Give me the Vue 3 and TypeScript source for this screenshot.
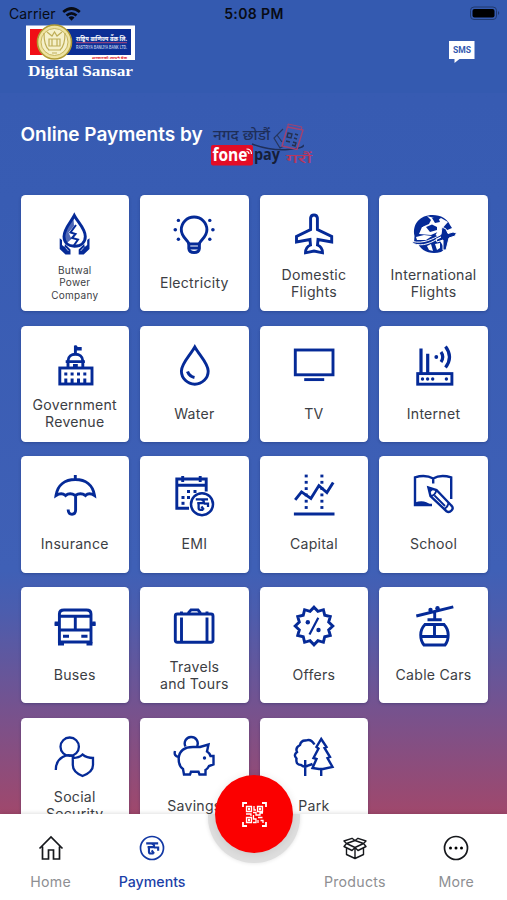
<script setup lang="ts">
interface Service {
  label: string[]
  icon: string
  small?: boolean
}

const rupee = 'M0 1H13M1.5 5H8.5Q9 1.5 6 1.5M3 5V10Q3 12 5 12H8M6 8.5L8.5 12M8.5 5.5H13V9'

function starPoints(count: number, outer: number, inner: number): string {
  const pts: string[] = []
  for (let i = 0; i < count * 2; i++) {
    const r = i % 2 === 0 ? outer : inner
    const a = (Math.PI * i) / count - Math.PI / 2
    pts.push(`${(24 + r * Math.cos(a)).toFixed(2)},${(24 + r * Math.sin(a)).toFixed(2)}`)
  }
  return pts.join(' ')
}

const fill = 'fill="currentColor" stroke="none"'

const dottedColumn = (x: number): string =>
  [5, 11.3, 17.6, 23.9, 30.2, 36.5]
    .map((y) => `<rect x="${x - 1.5}" y="${y - 1.4}" width="3" height="2.8" ${fill}/>`)
    .join('')

const services: Service[] = [
  {
    label: ['Butwal', 'Power', 'Company'],
    small: true,
    icon: `<path d="M23.3 5.5C20 12 13 18.5 13 26.5C13 32.5 17 36 23.5 36.3C30.5 36 34.3 32 34.3 26.5C34.3 18.5 26.5 12 23.3 5.5Z"/>
      <path d="M22.5 8C19 15 13.5 20 13.5 26.5C13.500 29 14.500 31 16.500 32.500L20.500 29L17.500 22.500L23 16Z" ${fill} opacity=".7"/>
      <path d="M25 15L19.5 22.5L24.5 24L21 28L27 29.5L22.5 36" stroke-width="2"/>
      <path d="M8.7 28.2L11 30V35L13.5 37L14 34L19.5 39.5V44.5H14.5L8.7 39Z M38.5 28.2L36.2 30V35L33.7 37L33.2 34L27.700 39.500V44.500H32.700L38.500 39Z" ${fill}/>
      <path d="M14.500 37.500L17.500 41M32.700 37.500L29.700 41" stroke="#fff" stroke-width=".7"/>`
  },
  {
    label: ['Electricity'],
    icon: `<path d="M19 34.500C19 30.500 11.300 28 11.300 19.800A12.800 12.800 0 0 1 36.900 19.800C36.900 28 29.200 30.500 29.200 34.500"/>
      <path d="M18.800 34H29.400V38.500Q29 42.500 24.100 42.500T18.800 38.500Z"/><path d="M19 38H29" stroke-width="3"/>
      <g ${fill}><circle cx="5.300" cy="19.800" r="1.800"/><circle cx="42.900" cy="19.800" r="1.800"/><circle cx="8.400" cy="10.400" r="1.700"/><circle cx="39.800" cy="10.400" r="1.700"/><circle cx="8.400" cy="29.300" r="1.700"/><circle cx="39.800" cy="29.300" r="1.700"/></g>`
  },
  {
    label: ['Domestic', 'Flights'],
    icon: `<path d="M20.600 8Q21 5 24 5T27.400 8V19.500L41.700 26.500V32L28 29.500L27.500 35Q32.500 37 32.500 42.800L24 41L15.500 42.800Q15.500 37 20.500 35L20 29.500L6.500 32V26.500L20.600 19.500Z"/>`
  },
  {
    label: ['International', 'Flights'],
    icon: `<path d="M4.500 26C2 14 10 5 22.500 5C31 5 37.500 9 40 15L42 18L35 21L29 19L25.500 25L30 28L23 31L4 33Z" ${fill}/>
      <path d="M7 31C10 41 20 45 31 42L35 39L30 31L25 29L16 34Z" ${fill}/>
      <path d="M17 6L21 10L19 14L12 17L9 24L21 25L30 21L38 12L31 8L28 10L24 8Z" fill="#fff" stroke="none"/>
      <path d="M16 17L22 14.500L27 17V20L20 22ZM22 8L28 7L30 12L25 13ZM9 16L13 13V17Z" ${fill}/>
      <path d="M6 27L14 25L22 26L16 30L7 30ZM17 36L21 34L23 41L19 40ZM25 34L30 33V38L27 40Z" fill="#fff" stroke="none"/>
      <path d="M2.500 31.500C13 34 23 29 31 24.500L32 17L36 19L38 23.500L43 22L46.500 23L45 26L39 28L36 40L33 40L33 30L27 32L26 29L31 27C21 33 13 37 3 33.500Z" fill="currentColor" stroke="#fff" stroke-width="1"/>`
  },
  {
    label: ['Government', 'Revenue'],
    icon: `<rect x="8.800" y="27" width="32.200" height="16"/><path d="M14.700 20.600H33.900M17 20C17 11 31.800 11 31.800 20V26M17 20V26M24.400 13V4.500"/>
      <path d="M24.400 4L27 6L30.700 6V9.500H24.400ZM22 23H26.800V27H22Z" ${fill}/>
      <g ${fill}><rect x="13.300" y="31.500" width="3" height="3"/><rect x="19.600" y="31.500" width="3" height="3"/><rect x="26" y="31.500" width="3" height="3"/><rect x="32.300" y="31.500" width="3" height="3"/><rect x="13.300" y="37.500" width="3" height="5"/><rect x="19.600" y="37.500" width="3" height="5"/><rect x="26" y="37.500" width="3" height="5"/><rect x="32.300" y="37.500" width="3" height="5"/></g>`
  },
  {
    label: ['Water'],
    icon: `<path d="M24.800 6C20 14.500 11.400 22.500 11.400 30A13.400 13.200 0 0 0 38.200 30C38.200 22.500 29.600 14.500 24.800 6Z"/><path d="M17.500 30.500Q19.500 35.500 24.500 36.500" stroke-width="3.200"/>`
  },
  {
    label: ['TV'],
    icon: `<rect x="5.300" y="9" width="37.700" height="24.800"/><path d="M14.200 38.600H34.200"/>`
  },
  {
    label: ['Internet'],
    icon: `<rect x="7.700" y="32.600" width="34.200" height="10.600"/><path d="M11 7.500V32M17.700 12.800V32M31 11Q34.500 16 31 21M35.500 5.500Q43.500 16 35.500 26.500" stroke-width="3.200"/>
      <g ${fill}><circle cx="26.300" cy="16" r="1.900"/><circle cx="12.500" cy="38" r="1.700"/><circle cx="17.600" cy="38" r="1.700"/><circle cx="22.700" cy="38" r="1.700"/><circle cx="36.400" cy="38" r="1.700"/></g>`
  },
  {
    label: ['Insurance'],
    icon: `<path d="M24.300 4V9M5 24.500C6.500 14 14 8.500 24.300 8.500S42 14 43.500 24.500Q38 21 34.500 24.500Q29.500 21 24.300 24.500Q19 21 14.500 24.500Q10.500 21 5 24.500ZM24.600 24V39Q24.600 43.200 21 43.200T17.200 39V38.500"/>`
  },
  {
    label: ['EMI'],
    icon: `<path d="M19 37.300H6.800V8H36.200V20.500M6.800 14.300H36.200M12.700 5V11M30.200 5V11"/>
      <g ${fill}><rect x="17" y="19" width="3" height="3"/><rect x="23.500" y="19" width="3" height="3"/><rect x="11.500" y="25" width="3" height="3"/><rect x="17" y="25" width="3" height="3"/><rect x="11.500" y="30.800" width="3" height="3"/></g>
      <circle cx="32" cy="33.200" r="11" stroke-width="2.500"/><path transform="translate(25.800 27.500) scale(.94)" d="${rupee}" stroke-width="2.400"/>`
  },
  {
    label: ['Capital'],
    icon: `${dottedColumn(16.2)}${dottedColumn(31.9)}<path d="M5.200 28.800L11.500 20.900L20.900 27.500L28.900 14.600L36.900 21.500L43.200 11.500M3.900 43H44.500"/>`
  },
  {
    label: ['School'],
    icon: `<path d="M23.200 12.500V7.500C18 4.500 11 4.500 5 6.300V34H22M23.200 7.500C28 4.500 35 4.500 41.200 6.300V28" stroke-width="2.400"/>
      <path d="M5 34V31.500Q14 28 21 34Z" ${fill}/>
      <path d="M18.400 16.500L20.500 25L36.500 40.200Q39 42 41.500 39.500T41.300 34.500L26.500 19Z" fill="#fff" stroke-width="2.400"/><path d="M20.500 25Q25 25 26.500 19M34 38Q37.500 36.500 38.500 32M24.500 24.500L35 35" stroke-width="1.800"/><path d="M17.500 15.500L24 18L20 21.500Z" ${fill}/>`
  },
  {
    label: ['Buses'],
    icon: `<path d="M8.400 40V12Q8.400 8 13 8H35.500Q40 8 40 12V40ZM8.400 14.300H40M8.400 28H40M24.300 14.300V28M12 34.200H18M30.300 34.200H36.500M3.700 22H8M40 22H44.500" />
      <path d="M3.700 19.500H7V24H3.700ZM41.200 19.500H44.500V24H41.200ZM7 40H13V43.500H7ZM35.500 40H41.400V43.500H35.500Z" ${fill}/>`
  },
  {
    label: ['Travels', 'and Tours'],
    icon: `<rect x="5.300" y="12" width="37.700" height="28.200" rx="2"/><path d="M11.500 15.500V40M37 15.500V40M18.700 12V10.500L21 7.900H28L30 10.500V12M11.500 9.500V12M37 9.500V12"/>`
  },
  {
    label: ['Offers'],
    icon: `<polygon points="${starPoints(12, 18.8, 15.2)}"/><path d="M28.300 15.700L19.500 32.500" stroke-width="2.200"/><circle cx="17.800" cy="20.300" r="2.200" ${fill}/><circle cx="28.500" cy="28" r="2.200" ${fill}/>`
  },
  {
    label: ['Cable Cars'],
    icon: `<path d="M6.300 14L43.300 4.800M17.500 17.700H31.700M24.700 10V18M15 22.500H34Q38.200 27 38.200 33Q38.200 39 35 43H14Q10.700 39 10.700 33Q10.700 27 15 22.500ZM24.500 22.500V34.500M10.700 34.500H38.200"/><circle cx="20.500" cy="8" r="2.200" ${fill}/><circle cx="27.500" cy="6.200" r="2.200" ${fill}/>`
  },
  {
    label: ['Social', 'Security'],
    icon: `<g stroke-width="2.300"><circle cx="18.700" cy="13.700" r="9.200"/><path d="M4.800 37C4.800 24 17 19.500 23 24M31.500 21.500Q36 25 42 25V32Q42 39 31.500 43Q21.800 39 21.800 32V25Q28 25 31.500 21.500Z"/></g>`
  },
  {
    label: ['Savings'],
    icon: `<g stroke-width="2.400"><path d="M15.500 13.500A6.500 6.500 0 1 1 27.200 13M8.700 25C9.500 17.500 15 14 23 14H30L38.500 11.500L37 18.500Q39.500 20 40.500 23H43.500V31.500L39 33Q37.500 36 35.500 37V41.500H29.500L28.500 38.800H21L20 41.500H14L13 36Q8.500 33 8.700 25ZM8.700 24Q3.500 23 5 18"/></g><circle cx="34.500" cy="25" r="1.700" ${fill}/>`
  },
  {
    label: ['Park'],
    icon: `<g stroke-width="2.400"><path d="M31.200 6L36.500 14L34.500 15L40 24L37.500 25L42.500 34L33 36H29L22.500 35L26.500 26L23.500 25L28.500 15.500L26.500 14ZM31.200 36V43M15.200 27V43M24.500 11.500Q21 5.500 16 7.500Q11 7 10 12Q5 14.500 7 19Q3 22 6.500 25.500Q5.500 32 11 32Q15 35 18 32.500L22.500 31"/></g>`
  }
]

const tabs = [
  { label: 'Home', active: false },
  { label: 'Payments', active: true },
  { label: '', active: false },
  { label: 'Products', active: false },
  { label: 'More', active: false }
]
</script>

<template>
  <div class="phone">
    <header class="top">
      <div class="status">
        <div class="carrier">
          Carrier
          <svg width="19" height="14" viewBox="0 0 19 14">
            <g fill="none" stroke="#080b14" stroke-width="2.700">
              <path d="M1.200 5Q9.500 -2 17.800 5" /><path d="M4.500 8.600Q9.500 4.300 14.500 8.600" />
            </g>
            <path d="M6.500 10.500Q9.500 8 12.500 10.500L9.500 13.700Z" fill="#080b14" />
          </svg>
        </div>
        <div class="time">5:08 PM</div>
        <svg class="battery" width="32" height="15" viewBox="0 0 32 15">
          <rect x="1.500" y="1" width="26" height="12.500" rx="3.500" fill="none" stroke="#20396f" />
          <rect x="3.500" y="3" width="22" height="8.500" rx="2" fill="#000" />
          <path d="M29 5Q31.500 7 29 9Z" fill="#20396f" />
        </svg>
      </div>
      <div class="brand-row">
        <svg class="brand" width="114" height="58" viewBox="0 0 114 58">
          <rect x="2" y="1.500" width="109" height="34.500" fill="#fff" />
          <rect x="6" y="5" width="101" height="26" fill="#0c2f95" />
          <rect x="6" y="5" width="16" height="26" fill="#f10f16" />
          <circle cx="30.500" cy="18" r="17" fill="#eee3a0" stroke="#b09b35" stroke-width="1.600" />
          <circle cx="30.500" cy="18" r="13.500" fill="#f5f0ca" stroke="#c7b65e" />
          <path d="M20 9Q20 22 25 26M41 9Q41 22 36 26M23 8L28 12L30.500 8L33 12L38 8M25 15H36V22H25ZM28 15V22M33 15V22M24 26H37M28 29H33" fill="none" stroke="#bfae58" stroke-width="1.200" />
          <text x="52" y="17" textLength="51" lengthAdjust="spacingAndGlyphs" class="np white">राष्ट्रिय बाणिज्य बैंक लि.</text>
          <path d="M52 18.700H103" stroke="#d64b74" stroke-width=".8" />
          <text x="52" y="24.500" textLength="51" lengthAdjust="spacingAndGlyphs" class="en">RASTRIYA BANIJYA BANK LTD.</text>
          <text x="68" y="34.500" textLength="35" lengthAdjust="spacingAndGlyphs" class="np red">सरकारको आफ्नै बैंक</text>
          <text x="4" y="52" textLength="105" lengthAdjust="spacingAndGlyphs" class="digital">Digital Sansar</text>
        </svg>
        <svg class="sms" width="26" height="23" viewBox="0 0 26 23">
          <path d="M0 0H25.500V18H10.500L5.500 22V18H0Z" fill="#fff" />
          <text x="4" y="12.300" textLength="18" lengthAdjust="spacingAndGlyphs">SMS</text>
        </svg>
      </div>
    </header>

    <main class="content">
      <div class="heading">
        <h1>Online Payments by</h1>
        <svg width="106" height="46" viewBox="0 0 106 46">
          <text x="4" y="17" textLength="57" lengthAdjust="spacingAndGlyphs" class="slogan">नगद छोडौं</text>
          <path d="M43 21Q62 28 79 26.500T94 22" fill="none" stroke="#1e2e59" stroke-width="1.500" />
          <path d="M74 6L65 15L71 25L75 23M68 12L73 19" fill="none" stroke="#26365f" stroke-width="1.200" />
          <path d="M78.500 4L94 7L88 26.500L73 23Z" fill="none" stroke="#a34270" stroke-width="1.400" />
          <path d="M79 4V1L93 4L92 7" fill="none" stroke="#a34270" stroke-width="1" />
          <path d="M79 10L83 11L82 15L78 14ZM86 11L89 12M85 15L88 16M77 18L81 19M84 19L87 20L86 23L83 22" fill="none" stroke="#25304f" stroke-width="1.400" />
          <rect x="2" y="22" width="42" height="20.500" rx="2" fill="#e30d27" />
          <text x="3.500" y="38.300" textLength="35" lengthAdjust="spacingAndGlyphs" class="fone">fone</text>
          <path d="M37.500 28.500Q40 28.500 40 31M37.500 26Q42.500 26 42.500 31" fill="none" stroke="#fff" stroke-width="1.200" />
          <text x="45" y="37" textLength="26" lengthAdjust="spacingAndGlyphs" class="pay">pay</text>
          <text x="77" y="40" textLength="26" lengthAdjust="spacingAndGlyphs" class="slogan rose">गरौं</text>
        </svg>
      </div>

      <div class="grid">
        <article v-for="service in services" :key="service.label[0]" class="card">
          <svg class="icon" width="48" height="48" viewBox="0 0 48 48" fill="none" stroke="currentColor" stroke-width="2.900" v-html="service.icon" />
          <div class="label" :class="{ small: service.small }">
            <span v-for="line in service.label" :key="line">{{ line }}</span>
          </div>
        </article>
      </div>
    </main>

    <nav class="nav">
      <div class="halo-clip"><div class="halo" /></div>
      <div class="fab">
        <svg width="25" height="25" viewBox="0 0 25 25" fill="none" stroke="#fff" stroke-width="1.300">
          <path d="M1 5V1H5M20 1H24V5M24 20V24H20M5 24H1V20" stroke-width="1.800" />
          <path d="M4.500 4.500H9.500V9.500H4.500ZM15.500 4.500H20.500V9.500H15.500ZM4.500 15.500H9.500V20.500H4.500ZM12 4V8H14M11 10.500H14V13H18V11H21M4 12H9V14M11.500 13V17H14V20.500H11M16 15.500H20.500M16 18V21M18.500 18.500H21V21" />
          <path d="M6.500 6.500H7.500V7.500H6.500ZM17.500 6.500H18.500V7.500H17.500ZM6.500 17.500H7.500V18.500H6.500Z" />
        </svg>
      </div>
      <div v-for="tab in tabs" :key="tab.label" class="tab" :class="{ active: tab.active }">
        <svg v-if="tab.label === 'Home'" width="26" height="26" viewBox="0 0 26 26" fill="none" stroke="#16181c" stroke-width="1.700">
          <path d="M1.500 13.500L13 2L24.500 13.500M4.500 11.500V24H10.500V15H15.500V24H21.500V11.500" />
        </svg>
        <svg v-else-if="tab.label === 'Payments'" width="26" height="26" viewBox="0 0 26 26" fill="none" stroke="#1238a4">
          <circle cx="13" cy="13" r="11.500" stroke-width="1.700" />
          <path :d="rupee" transform="translate(7.200 7.500) scale(.92)" stroke-width="2.300" />
        </svg>
        <svg v-else-if="tab.label === 'Products'" width="26" height="26" viewBox="0 0 26 26" fill="none" stroke="#16181c" stroke-width="1.400" stroke-linejoin="round">
          <path d="M4.500 13V19.500L13 23.500L21.500 19.500V13M13 12.500V23.500M4.500 8.500L13 12.500L21.500 8.500L13 5.500ZM4.500 8.500L2 11.500L10 15.500L13 12.500L16 15.500L24 11.500L21.500 8.500L24 6L16 3.300L13 5.500L10 3.300L2 6Z" />
        </svg>
        <svg v-else-if="tab.label === 'More'" width="26" height="26" viewBox="0 0 26 26">
          <circle cx="13" cy="13" r="11.500" fill="none" stroke="#16181c" stroke-width="1.700" />
          <circle cx="7.500" cy="13" r="1.500" /><circle cx="13" cy="13" r="1.500" /><circle cx="18.500" cy="13" r="1.500" />
        </svg>
        <span>{{ tab.label }}</span>
      </div>
    </nav>
  </div>
</template>

<style>
body {
  margin: 0;
  overflow: hidden;
}
</style>

<style scoped>
.phone {
  width: 507px;
  height: 900px;
  display: flex;
  flex-direction: column;
  overflow: hidden;
  font-family: Inter, "Liberation Sans", sans-serif;
  background: linear-gradient(#365ab1 0, #385cb3 200px, #3f60b6 570px, #4b5dae 610px, #76528e 710px, #a0486c 814px);
}

.top {
  height: 93px;
  flex: none;
  background: #345ab0;
}

.status {
  height: 24px;
  padding: 3px 6px 0 9px;
  display: grid;
  grid-template-columns: 1fr auto 1fr;
  align-items: center;
  box-sizing: border-box;
  font-size: 14px;
  color: #080b14;
}

.carrier {
  display: flex;
  align-items: center;
  gap: 6px;
  letter-spacing: 0.1px;
}

.time {
  font-weight: 600;
  letter-spacing: 0.4px;
  transform: translateX(-1px);
}

.battery {
  justify-self: end;
}

.brand-row {
  display: flex;
  justify-content: space-between;
  padding: 0 32px 0 24px;
}

.sms {
  margin-top: 17px;
}

.sms text {
  font: 700 9px Roboto, sans-serif;
  fill: #345ab0;
}

.np {
  font: 700 6.500px "Noto Sans", sans-serif;
}

.white {
  fill: #fff;
}

.red {
  fill: #e02430;
  font-size: 3.500px;
}

.en {
  font: 700 5px "Liberation Sans", sans-serif;
  fill: #bcc4e4;
}

.digital {
  font: 700 14.500px "Liberation Serif", serif;
  fill: #fff;
}

.content {
  flex: 1;
  min-height: 0;
  overflow: hidden;
  padding: 0 19px 0 20.500px;
}

.heading {
  height: 102px;
  display: flex;
}

h1 {
  width: 182px;
  margin: 30px 6px 0 0;
  font-size: 19px;
  line-height: 24px;
  font-weight: 600;
  color: #fff;
  white-space: nowrap;
}

.heading svg {
  margin-top: 30px;
}

.slogan {
  font: 500 13.500px "Noto Sans", sans-serif;
  fill: #1e2e59;
}

.rose {
  font-size: 13px;
  fill: #b8375f;
}

.fone {
  font: 700 18px "Open Sans", sans-serif;
  fill: #fff;
}

.pay {
  font: 700 16px "Open Sans", sans-serif;
  fill: #161e38;
}

.grid {
  display: grid;
  grid-template-columns: repeat(4, 108.500px);
  grid-auto-rows: 116.200px;
  column-gap: 11.100px;
  row-gap: 14.500px;
}

.card {
  display: flex;
  flex-direction: column;
  align-items: center;
  padding-top: 15px;
  box-sizing: border-box;
  border-radius: 4.500px;
  background: #fff;
  box-shadow: 0 1px 3px rgba(10, 25, 80, 0.3);
}

.icon {
  flex: none;
  color: #052a97;
}

.label {
  height: 49px;
  display: flex;
  flex-direction: column;
  justify-content: center;
  align-items: center;
  font-size: 14.100px;
  line-height: 17px;
  letter-spacing: 0.25px;
  color: #3c3e44;
  white-space: nowrap;
}

.small {
  font-size: 10px;
  line-height: 12.400px;
}

.nav {
  position: relative;
  flex: none;
  height: 86px;
  display: grid;
  grid-template-columns: repeat(5, 101.400px);
  background: #fff;
  box-shadow: 0 -1px 4px rgba(0, 0, 0, 0.12);
}

.halo-clip {
  position: absolute;
  inset: 0;
  overflow: hidden;
}

.halo {
  position: absolute;
  left: 208px;
  top: -43px;
  width: 92px;
  height: 92px;
  border-radius: 50%;
  background: #dedede;
  box-shadow: 0 0 4px rgba(0, 0, 0, 0.12);
}

.fab {
  position: absolute;
  left: 215px;
  top: -39px;
  width: 78px;
  height: 78px;
  border-radius: 50%;
  display: flex;
  align-items: center;
  justify-content: center;
  background: #fb0000;
  box-shadow: 0 1px 8px rgba(0, 0, 0, 0.1);
}

.tab {
  display: flex;
  flex-direction: column;
  align-items: center;
  padding-top: 20.500px;
  font-size: 14.200px;
  line-height: 18px;
  letter-spacing: 0.25px;
  color: #8e8f93;
}

.tab span {
  margin-top: 12px;
}

.active {
  color: #1b3fa8;
  font-weight: 500;
  letter-spacing: 0;
}
</style>
